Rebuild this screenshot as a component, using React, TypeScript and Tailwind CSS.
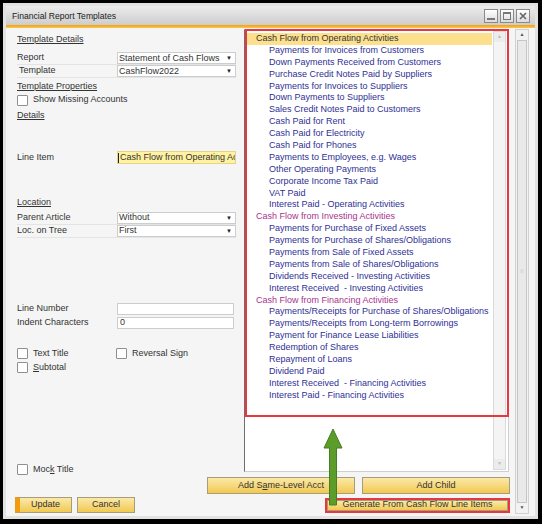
import React from "react";

const operating = [
  "Payments for Invoices from Customers",
  "Down Payments Received from Customers",
  "Purchase Credit Notes Paid by Suppliers",
  "Payments for Invoices to Suppliers",
  "Down Payments to Suppliers",
  "Sales Credit Notes Paid to Customers",
  "Cash Paid for Rent",
  "Cash Paid for Electricity",
  "Cash Paid for Phones",
  "Payments to Employees, e.g. Wages",
  "Other Operating Payments",
  "Corporate Income Tax Paid",
  "VAT Paid",
  "Interest Paid - Operating Activities",
];

const investing = [
  "Payments for Purchase of Fixed Assets",
  "Payments for Purchase of Shares/Obligations",
  "Payments from Sale of Fixed Assets",
  "Payments from Sale of Shares/Obligations",
  "Dividends Received - Investing Activities",
  "Interest Received\u00a0 - Investing Activities",
];

const financing = [
  "Payments/Receipts for Purchase of Shares/Obligations",
  "Payments/Receipts from Long-term Borrowings",
  "Payment for Finance Lease Liabilities",
  "Redemption of Shares",
  "Repayment of Loans",
  "Dividend Paid",
  "Interest Received\u00a0 - Financing Activities",
  "Interest Paid - Financing Activities",
];

function Check({ children }: { children: React.ReactNode }) {
  return (
    <span className="flex items-center gap-[5px]">
      <span className="inline-block w-[11px] h-[11px] bg-white border border-[#8f8f8f] rounded-[1px]" />
      <span>{children}</span>
    </span>
  );
}

function Select({ value }: { value: string }) {
  return (
    <div className="w-[119px] h-[12px] bg-white border border-[#cdcdcd] flex items-center justify-between pl-[1px] pr-[3px]">
      <span className="leading-none">{value}</span>
      <span className="text-[6px] leading-none text-[#222]">▼</span>
    </div>
  );
}

function Field({ label, children, indent }: { label: string; children: React.ReactNode; indent?: boolean }) {
  return (
    <div className="flex items-center h-[13px] border-b border-[#e4e4e4]">
      <span className={`w-[100px] ${indent ? "pl-[2px]" : ""}`}>{label}</span>
      {children}
    </div>
  );
}

function Heading({ children }: { children: React.ReactNode }) {
  return <div className="h-[12px] leading-[12px] underline">{children}</div>;
}

function YellowButton({ children, className }: { children: React.ReactNode; className?: string }) {
  return (
    <div
      className={`flex items-center justify-center bg-linear-to-b from-[#fbe9a6] to-[#f1c94e] border border-[#a79c7c] text-[#333] ${className ?? ""}`}
    >
      {children}
    </div>
  );
}

function ListRow({ text, kind }: { text: string; kind: "op" | "head" | "item" }) {
  if (kind === "op")
    return <div className="h-[11.9px] leading-[11.9px] pl-[9px] bg-[#fde08e] text-[#333]">{text}</div>;
  if (kind === "head")
    return <div className="h-[11.9px] leading-[11.9px] pl-[9px] text-[#a8338e]">{text}</div>;
  return <div className="h-[11.9px] leading-[11.9px] pl-[22px] text-[#2f2f95] whitespace-pre">{text}</div>;
}

export default function App() {
  return (
    <div className="relative w-[542px] h-[524px] bg-black pt-[3px] pl-[3px] pr-[4px] pb-[5px] font-['Liberation_Sans',Arial,sans-serif] text-[9px] text-[#333]">
      <div className="h-full bg-[#e2e2e2] p-[3px] flex flex-col">
        {/* title bar */}
        <div className="h-[19px] flex items-center justify-between bg-linear-to-b from-[#ececec] to-[#cdcdcd] pl-[6px] pr-[5px]">
          <span className="text-[8.6px] text-[#222] pt-[1px]">Financial Report Templates</span>
          <div className="flex gap-[2px]">
            <div className="w-[14px] h-[14px] bg-linear-to-b from-white to-[#dcdcdc] border border-[#8a8a8a] flex items-end justify-center pb-[2px]">
              <span className="w-[8px] h-[2px] bg-[#777]" />
            </div>
            <div className="w-[14px] h-[14px] bg-linear-to-b from-white to-[#dcdcdc] border border-[#8a8a8a] flex items-center justify-center">
              <span className="w-[8px] h-[8px] border border-[#777] border-t-2" />
            </div>
            <div className="w-[14px] h-[14px] bg-linear-to-b from-white to-[#dcdcdc] border border-[#8a8a8a] flex items-center justify-center">
              <svg width="8" height="8" viewBox="0 0 8 8">
                <path d="M1 1 L7 7 M7 1 L1 7" stroke="#666" strokeWidth="1.6" />
              </svg>
            </div>
          </div>
        </div>
        <div className="h-[3px] bg-linear-to-b from-[#f2a000] to-[#f8c64a]" />

        {/* body */}
        <div className="flex-1 bg-[#f5f5f5] flex">
          <div className="w-[507px] flex flex-col">
            <div className="flex h-[444px]">
              {/* left panel */}
              <div className="w-[238px] pl-[11px] pr-[8px] flex flex-col">
                <div className="mt-[5px]">
                  <Heading>Template Details</Heading>
                </div>
                <div className="mt-[7px]">
                  <Field label="Report">
                    <Select value="Statement of Cash Flows" />
                  </Field>
                  <Field label="Template" indent>
                    <Select value="CashFlow2022" />
                  </Field>
                </div>
                <div className="mt-[2px]">
                  <Heading>Template Properties</Heading>
                </div>
                <div className="mt-[2px] h-[12px] flex items-center">
                  <Check>Show Missing Accounts</Check>
                </div>
                <div className="mt-[3px]">
                  <Heading>Details</Heading>
                </div>
                <div className="mt-[30px] flex items-center h-[14px]">
                  <span className="w-[100px]">Line Item</span>
                  <div className="w-[119px] h-[13px] bg-[#fff2a0] border border-[#e3d48a] flex items-center overflow-hidden whitespace-nowrap">
                    <span className="w-[1px] h-[10px] bg-[#222] mr-[1px] shrink-0" />
                    <span>Cash Flow from Operating Ac</span>
                  </div>
                </div>
                <div className="mt-[31px]">
                  <Heading>Location</Heading>
                </div>
                <div className="mt-[4px]">
                  <Field label="Parent Article">
                    <Select value="Without" />
                  </Field>
                  <Field label="Loc. on Tree">
                    <Select value="First" />
                  </Field>
                </div>
                <div className="mt-[65px] flex flex-col gap-[1px]">
                  <div className="flex items-center h-[13px]">
                    <span className="w-[100px]">Line Number</span>
                    <div className="w-[117px] h-[12px] bg-white border border-[#cdcdcd]" />
                  </div>
                  <div className="flex items-center h-[13px]">
                    <span className="w-[100px]">Indent Characters</span>
                    <div className="w-[117px] h-[12px] bg-white border border-[#cdcdcd] flex items-center pl-[2px]">0</div>
                  </div>
                </div>
                <div className="mt-[18px] flex flex-col gap-[2px]">
                  <div className="h-[12px] flex items-center">
                    <div className="w-[99px]">
                      <Check>Text Title</Check>
                    </div>
                    <Check>Reversal Sign</Check>
                  </div>
                  <div className="h-[12px] flex items-center">
                    <Check>
                      <span className="underline">S</span>ubtotal
                    </Check>
                  </div>
                </div>
                <div className="mt-[90px] h-[12px] flex items-center">
                  <Check>
                    Moc<span className="underline">k</span> Title
                  </Check>
                </div>
              </div>

              {/* list box */}
              <div className="w-[265px] mt-[1px] h-[443px] bg-white border-l border-l-[#6e6e6e] border-y border-r border-[#cfcfcf] flex">
                <div className="flex-1 pl-[2px] pt-[3px] pr-[1px] whitespace-nowrap">
                  <ListRow kind="op" text="Cash Flow from Operating Activities" />
                  {operating.map((t) => (
                    <ListRow key={t} kind="item" text={t} />
                  ))}
                  <ListRow kind="head" text="Cash Flow from Investing Activities" />
                  {investing.map((t) => (
                    <ListRow key={t} kind="item" text={t} />
                  ))}
                  <ListRow kind="head" text="Cash Flow from Financing Activities" />
                  {financing.map((t) => (
                    <ListRow key={t} kind="item" text={t} />
                  ))}
                </div>
                <div className="w-[13px] mr-[2px] my-[1px] flex flex-col bg-[#f4f4f4] border border-[#dadada]">
                  <div className="h-[10px] bg-[#ececec] flex items-center justify-center text-[5px] text-[#bbb]">▲</div>
                  <div className="flex-1" />
                  <div className="h-[10px] bg-[#ececec] flex items-center justify-center text-[5px] text-[#bbb]">▼</div>
                </div>
              </div>
            </div>

            {/* bottom buttons */}
            <div className="mt-[5px] h-[17px] flex justify-end pr-[3px] gap-[7px]">
              <YellowButton className="w-[148px]">
                Add S<span className="underline">a</span>me-Level Acct
              </YellowButton>
              <YellowButton className="w-[148px]">Add Child</YellowButton>
            </div>
            <div className="mt-[3px] h-[16px] flex items-center pl-[9px] pr-[3px]">
              <YellowButton className="w-[57px] h-[16px] border-l-[5px] border-l-[#f29b0d]">Update</YellowButton>
              <YellowButton className="w-[58px] h-[16px] ml-[5px]">Cancel</YellowButton>
              <div className="ml-auto w-[185px] h-[15px] border-2 border-[#e8383f] flex">
                <YellowButton className="flex-1">Generate From Cash Flow Line Items</YellowButton>
              </div>
            </div>
          </div>

          {/* outer scrollbar */}
          <div className="w-[18px] pt-[1px] pb-[2px] pl-[2px] pr-[2px] flex flex-col">
            <div className="flex-1 flex flex-col bg-[#f2f2f2] border border-[#d2d2d2]">
              <div className="h-[10px] flex items-center justify-center text-[5px] text-[#555]">▲</div>
              <div className="flex-1 mx-[1px] bg-[#e9e9e9] border border-[#c6c6c6] flex items-center justify-center text-[6px] text-[#aaa]">⁞⁞</div>
              <div className="h-[10px] flex items-center justify-center text-[5px] text-[#555]">▼</div>
            </div>
          </div>
          <div className="w-[4px]" />
        </div>
      </div>

      {/* annotation overlays */}
      <div className="pointer-events-none absolute left-[245px] top-[29px] w-[264px] h-[388px] border-2 border-[#e8383f]" />
      <svg className="pointer-events-none absolute left-[322px] top-[427px]" width="22" height="80" viewBox="0 0 22 80">
        <path d="M11 2 L20 21 L14.5 21 L14.5 78 L7.5 78 L7.5 21 L2 21 Z" fill="#5b9c2b" stroke="#467f1f" strokeWidth="1" />
      </svg>
    </div>
  );
}
